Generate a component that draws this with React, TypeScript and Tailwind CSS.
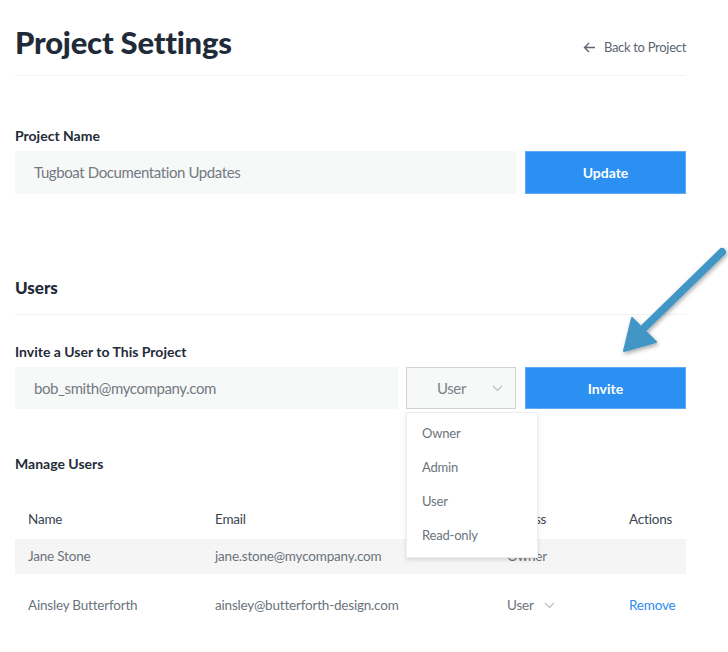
import React from 'react';

const USERS = [
  { name: 'Jane Stone', email: 'jane.stone@mycompany.com', access: 'Owner', removable: false },
  { name: 'Ainsley Butterforth', email: 'ainsley@butterforth-design.com', access: 'User', removable: true },
];

const ROLES = ['Owner', 'Admin', 'User', 'Read-only'];

const Chevron: React.FC<{ className?: string }> = ({ className }) => (
  <svg className={className} width="11" height="7" viewBox="0 0 11 7" fill="none">
    <path d="M1 1l4.5 4.5L10 1" stroke="#b9bec4" strokeWidth="1.2" />
  </svg>
);

const App: React.FC = () => {
  return (
    <div className="relative w-[728px] h-[652px] overflow-hidden bg-white text-[#6b737c] font-['Lato',sans-serif]">
      <div className="pl-[15px] pr-[42px]">
        {/* header */}
        <div className="flex items-end justify-between pt-[24px] pb-[15px] border-b border-[#f2f3f4]">
          <h1 className="text-[31px] leading-[36px] font-black tracking-[-0.2px] text-[#1f2b38]">Project Settings</h1>
          <a className="flex items-center gap-[8px] mb-[3px] text-[13px] tracking-[-0.3px] text-[#5c6570]">
            <svg width="13" height="11" viewBox="0 0 13 11" fill="none">
              <path d="M12 5.5H1.5M6 1L1.5 5.5 6 10" stroke="#5c6570" strokeWidth="1.4" />
            </svg>
            Back to Project
          </a>
        </div>

        {/* project name */}
        <label className="block mt-[51px] text-[14px] leading-[18px] font-bold text-[#1f2b38]">Project Name</label>
        <div className="flex gap-[9px] mt-[6px]">
          <div className="flex-1 h-[43px] flex items-center pl-[19px] bg-[#f7f8f8] text-[15px] tracking-[-0.4px] text-[#737a82]">
            Tugboat Documentation Updates
          </div>
          <button className="w-[161px] h-[43px] bg-[#2b90f1] border border-[#5eaaf5] text-white text-[14px] font-bold">Update</button>
        </div>

        {/* users */}
        <h2 className="mt-[83px] text-[17px] leading-[22px] font-black text-[#1f2b38] pb-[15px] border-b border-[#f2f3f4]">Users</h2>

        <label className="block mt-[28px] text-[14px] leading-[18px] font-bold text-[#1f2b38]">Invite a User to This Project</label>
        <div className="flex mt-[6px]">
          <div className="w-[383px] h-[42px] flex items-center pl-[19px] bg-[#f7f8f8] text-[15px] tracking-[-0.4px] text-[#737a82]">
            bob_smith@mycompany.com
          </div>
          <div className="relative ml-[8px]">
            <div className="w-[110px] h-[42px] flex items-center justify-between pl-[30px] pr-[12px] bg-[#f7f8f8] border border-[#cfd2d4] text-[15px] tracking-[-0.4px] text-[#7b8188]">
              User
              <Chevron />
            </div>
            <ul className="absolute left-0 top-[45px] w-[132px] py-[4px] bg-white border border-[#eceeef] shadow-[0_2px_4px_rgba(0,0,0,0.12)] text-[13px] tracking-[-0.2px] text-[#6b737c] z-10">
              {ROLES.map((role) => (
                <li key={role} className="h-[34px] flex items-center pl-[15px]">{role}</li>
              ))}
            </ul>
          </div>
          <button className="ml-[9px] flex-1 h-[42px] bg-[#2b90f1] border border-[#5eaaf5] text-white text-[14px] font-bold">Invite</button>
        </div>

        {/* manage */}
        <h3 className="mt-[46px] text-[14px] leading-[18px] font-bold text-[#1f2b38]">Manage Users</h3>

        <div className="mt-[26px] text-[13.5px] tracking-[-0.2px]">
          <div className="grid grid-cols-[187px_292px_122px_1fr] h-[40px] items-center pl-[13px] text-[#3a4550]">
            <span>Name</span>
            <span>Email</span>
            <span>Access</span>
            <span>Actions</span>
          </div>
          {USERS.map((u, i) => (
            <div
              key={u.email}
              className={`grid grid-cols-[187px_292px_122px_1fr] items-center pl-[13px] ${i % 2 === 0 ? 'h-[35px] bg-[#f5f5f5]' : 'h-[62px]'}`}
            >
              <span>{u.name}</span>
              <span>{u.email}</span>
              <span className="flex items-center gap-[10px]">
                {u.access}
                {u.removable && <Chevron />}
              </span>
              <span className="text-[#2a8cf0]">{u.removable ? 'Remove' : ''}</span>
            </div>
          ))}
        </div>
      </div>

      {/* annotation arrow */}
      <svg className="absolute left-0 top-0 pointer-events-none" width="728" height="652" viewBox="0 0 728 652">
        <defs>
          <filter id="sh" x="-20%" y="-20%" width="140%" height="140%">
            <feDropShadow dx="1" dy="2" stdDeviation="2" floodColor="#000" floodOpacity="0.35" />
          </filter>
        </defs>
        <g filter="url(#sh)">
          <path d="M722 252L645 327" stroke="#4396c5" strokeWidth="8" strokeLinecap="round" />
          <path d="M624 351L632 318L656 342Z" fill="#4396c5" stroke="#4396c5" strokeWidth="2" strokeLinejoin="round" />
        </g>
      </svg>
    </div>
  );
};

export default App;
